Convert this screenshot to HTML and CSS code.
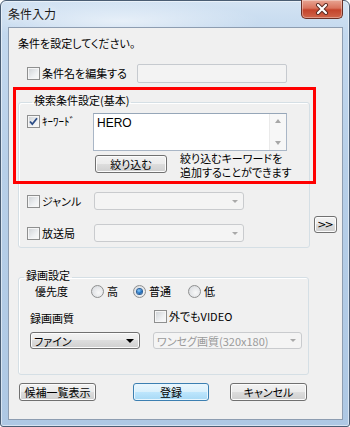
FILE: index.html
```html
<!DOCTYPE html>
<html lang="ja">
<head>
    <meta charset="utf-8">
    <title>条件入力</title>
    <link rel="stylesheet" href="styles.css">
</head>
<body>
    <div class="window">
        <div class="titlebar">
            <span class="title">条件入力</span>
            <button class="close" type="button">
                <svg width="14" height="12" viewBox="0 0 14 12">
                    <path d="M3 2 L11 10 M11 2 L3 10" stroke="#5a2a22" stroke-width="4" stroke-linecap="round" fill="none"/>
                    <path d="M3 2 L11 10 M11 2 L3 10" stroke="#ffffff" stroke-width="2.2" stroke-linecap="round" fill="none"/>
                </svg>
            </button>
        </div>

        <div class="client">
            <p class="intro">条件を設定してください。</p>

            <div class="row name-row">
                <label class="check name-check"><span class="box"></span>条件名を編集する</label>
                <span class="textbox"></span>
            </div>

            <div class="search-area">
                <fieldset class="group search-group">
                    <legend>検索条件設定(基本)</legend>
                    <div class="kw-row">
                        <label class="check kw-check">
                            <span class="box checked">
                                <svg width="11" height="11" viewBox="0 0 11 11">
                                    <path d="M2 5.5 L4.3 8.2 L9 2.2" stroke="#2b4c86" stroke-width="1.8" fill="none"/>
                                </svg>
                            </span>ｷｰﾜｰﾄﾞ
                        </label>
                        <div class="memo">
                            <span class="memo-text">HERO</span>
                            <span class="vscroll">
                                <span class="arrow up"></span>
                                <span class="arrow down"></span>
                            </span>
                        </div>
                    </div>
                    <div class="filter-row">
                        <button class="btn filter-btn" type="button">絞り込む</button>
                        <p class="hint">
                            <span class="hint-line">絞り込むキーワードを</span>
                            <span class="hint-line">追加することができます</span>
                        </p>
                    </div>
                    <div class="row pick-row genre-row">
                        <label class="check pick-check"><span class="box"></span>ジャンル</label>
                        <span class="combo disabled wide"><span class="arrow-down"></span></span>
                    </div>
                    <div class="row pick-row station-row">
                        <label class="check pick-check"><span class="box"></span>放送局</label>
                        <span class="combo disabled wide"><span class="arrow-down"></span></span>
                    </div>
                </fieldset>
                <button class="btn more-btn" type="button">&gt;&gt;</button>
            </div>

            <fieldset class="group rec-group">
                <legend>録画設定</legend>
                <div class="row prio-row">
                    <span class="prio-label">優先度</span>
                    <label class="radio-opt opt-high"><span class="radio"></span>高</label>
                    <label class="radio-opt opt-mid"><span class="radio on"></span>普通</label>
                    <label class="radio-opt"><span class="radio"></span>低</label>
                </div>
                <div class="row quality-row">
                    <span class="quality-label">録画画質</span>
                    <label class="check"><span class="box"></span>外でもVIDEO</label>
                </div>
                <div class="row combo-row">
                    <span class="combo active quality-combo">ファイン<span class="arrow-down"></span></span>
                    <span class="combo disabled oneseg-combo">ワンセグ画質(320x180)<span class="arrow-down"></span></span>
                </div>
            </fieldset>

            <div class="actions">
                <button class="btn act-btn" type="button">候補一覧表示</button>
                <button class="btn act-btn default" type="button">登録</button>
                <button class="btn act-btn" type="button">キャンセル</button>
            </div>
        </div>

        <div class="highlight"></div>
    </div>
</body>
</html>
```

FILE: styles.css
```css
* {
    margin: 0;
    padding: 0;
    box-sizing: border-box;
}

body {
    font-family: "Noto Sans CJK JP", "Noto Sans", sans-serif;
    font-size: 11px;
    font-feature-settings: "palt";
    color: #000;
    background: #fff;
}

.window {
    position: relative;
    width: 350px;
    height: 427px;
    display: flex;
    flex-direction: column;
    border: 1px solid #4a5d73;
    border-radius: 6px 6px 3px 3px;
    background:
        radial-gradient(ellipse 140px 20px at 120px 20px, rgba(255, 255, 255, 0.55), rgba(255, 255, 255, 0)),
        linear-gradient(180deg, #d3e3f3 0%, #c3d8ee 8%, #b7cfe8 40%, #aec8e4 100%);
    box-shadow: inset 0 0 0 1px rgba(255, 255, 255, 0.5);
}

/* title bar */

.titlebar {
    height: 26px;
    display: flex;
    align-items: flex-start;
}

.title {
    margin: 5px 0 0 7px;
    font-size: 12px;
    line-height: 16px;
    color: #1a1a1a;
    text-shadow: 0 0 6px rgba(255, 255, 255, 0.95);
}

.close {
    margin: -1px 6px 0 auto;
    width: 42px;
    height: 19px;
    border: 1px solid #6b2f25;
    border-top: none;
    border-radius: 0 0 5px 5px;
    background: linear-gradient(180deg, #e8a593 0%, #d9735d 45%, #c4432b 55%, #d0654a 100%);
    box-shadow: inset 0 0 0 1px rgba(255, 255, 255, 0.35);
    display: flex;
    align-items: center;
    justify-content: center;
}

/* client area */

.client {
    flex: 1;
    margin: 0 6px 6px 7px;
    border: 1px solid #8d9db1;
    background: #f0f0f0;
}

.intro {
    margin: 7px 0 0 9px;
    line-height: 16px;
}

.row {
    display: flex;
    align-items: center;
}

.check {
    display: flex;
    align-items: center;
    line-height: 13px;
    white-space: nowrap;
}

.box {
    width: 13px;
    height: 13px;
    margin-right: 2px;
    flex: none;
    border: 1px solid #8e8f8f;
    background: linear-gradient(135deg, #cdd0d4 0%, #eef0f2 60%, #fafafa 100%);
    box-shadow: inset 0 0 0 1px #f6f6f6;
    display: flex;
    align-items: center;
    justify-content: center;
}

.name-row {
    margin: 12px 0 0 18px;
    height: 20px;
}

.name-check {
    width: 110px;
}

.textbox {
    width: 150px;
    height: 19px;
    border: 1px solid #c6cacf;
    border-radius: 2px;
    background: #f3f3f3;
}

/* group boxes */

.group {
    min-width: 0;
    border: 1px solid #d5dfe5;
    border-radius: 3px;
    box-shadow: inset 1px 1px 0 #fff;
}

.group legend {
    margin-left: 5px;
    padding: 0 2px 4px;
    line-height: 12px;
}

.search-area {
    display: flex;
    align-items: flex-end;
    margin: 11px 0 0 9px;
}

.search-group {
    width: 292px;
    padding: 3px 0 5px 8px;
}

.kw-row {
    display: flex;
    height: 38px;
}

.kw-check {
    width: 66px;
    align-self: flex-start;
    margin-top: 2px;
}

.memo {
    width: 194px;
    height: 38px;
    display: flex;
    border: 1px solid #a9b6c6;
    border-top-color: #96a6b8;
    background: #fff;
}

.memo-text {
    flex: 1;
    padding: 2px 3px;
    line-height: 14px;
    font-family: "Liberation Sans", sans-serif;
    font-size: 12px;
}

.vscroll {
    width: 17px;
    display: flex;
    flex-direction: column;
    justify-content: space-between;
    align-items: center;
    padding: 5px 0;
    background: #f7f7f7;
    border-left: 1px solid #eaeaea;
}

.arrow {
    width: 0;
    height: 0;
    border-left: 3px solid transparent;
    border-right: 3px solid transparent;
}

.arrow.up {
    border-bottom: 4px solid #a7a7a7;
}

.arrow.down {
    border-top: 4px solid #a7a7a7;
}

.filter-row {
    display: flex;
    align-items: flex-start;
    height: 24px;
    margin-top: 2px;
}

.filter-btn {
    width: 72px;
    height: 18px;
    margin: 2px 0 0 68px;
}

.hint {
    margin: -2px 0 0 13px;
}

.hint-line {
    display: block;
    line-height: 14px;
}

.pick-row {
    height: 18px;
}

.genre-row {
    margin-top: 15px;
}

.station-row {
    margin-top: 14px;
}

.pick-check {
    width: 67px;
}

/* combo boxes */

.combo {
    position: relative;
    height: 18px;
    display: flex;
    align-items: center;
    padding-left: 3px;
    border-radius: 3px;
    line-height: 14px;
    white-space: nowrap;
}

.combo.disabled {
    border: 1px solid #c9cbce;
    background: #f4f4f4;
    color: #9a9a9a;
}

.combo.active {
    border: 1px solid #707070;
    background: linear-gradient(180deg, #f2f2f2 0%, #ebebeb 50%, #dddddd 50%, #cfcfcf 100%);
    box-shadow: inset 0 0 0 1px #fcfcfc;
}

.combo.wide {
    width: 150px;
}

.arrow-down {
    margin-left: auto;
    margin-right: 5px;
    width: 0;
    height: 0;
    border-left: 3px solid transparent;
    border-right: 3px solid transparent;
    border-top: 3px solid #a9a9a9;
}

.combo.active .arrow-down {
    border-left-width: 4px;
    border-right-width: 4px;
    border-top: 4px solid #000;
    margin-right: 5px;
}

/* buttons */

.btn {
    font: inherit;
    color: #000;
    border: 1px solid #707070;
    border-radius: 3px;
    background: linear-gradient(180deg, #f2f2f2 0%, #ebebeb 50%, #dddddd 50%, #cfcfcf 100%);
    box-shadow: inset 0 0 0 1px #fcfcfc;
    line-height: 14px;
    white-space: nowrap;
}

.btn.default {
    border-color: #3c7fb1;
    background: linear-gradient(180deg, #eaf6fd 0%, #d9f0fc 50%, #bee6fd 50%, #a7d9f5 100%);
    box-shadow: inset 0 0 0 1px #e8f6fe;
}

.more-btn {
    width: 23px;
    height: 17px;
    margin: 0 0 15px 4px;
    font-family: "DejaVu Sans", sans-serif;
    font-size: 11px;
    letter-spacing: -2px;
    padding-right: 2px;
}

/* recording group */

.rec-group {
    width: 291px;
    margin: 21px 0 0 9px;
    padding: 0 0 25px 0;
}

.prio-row {
    height: 13px;
    margin-left: 16px;
    line-height: 13px;
}

.prio-label {
    width: 56px;
}

.radio-opt {
    display: flex;
    align-items: center;
}

.opt-high {
    width: 42px;
}

.opt-mid {
    width: 55px;
}

.radio {
    width: 13px;
    height: 13px;
    margin-right: 3px;
    border: 1px solid #8e8f8f;
    border-radius: 50%;
    background: radial-gradient(circle at 60% 60%, #f8f8f8 0%, #e2e4e7 60%, #cfd2d6 100%);
    display: flex;
    align-items: center;
    justify-content: center;
}

.radio.on::after {
    content: "";
    width: 5px;
    height: 5px;
    border-radius: 50%;
    background: radial-gradient(circle at 40% 35%, #8fd0ff 0%, #1e6fc0 55%, #0f3f7c 100%);
    box-shadow: 0 0 0 1px #2a5f98;
}

.quality-row {
    height: 13px;
    margin: 12px 0 0 11px;
}

.quality-label {
    width: 124px;
    margin-top: 3px;
}

.combo-row {
    height: 17px;
    margin: 9px 0 0 11px;
}

.combo-row .combo {
    height: 17px;
}

.quality-combo {
    width: 110px;
}

.oneseg-combo {
    width: 149px;
    margin-left: 13px;
}

.actions {
    display: flex;
    margin: 8px 0 0 10px;
}

.act-btn {
    width: 77px;
    height: 18px;
}

.act-btn.default {
    width: 76px;
    margin-left: 37px;
}

.act-btn.default + .act-btn {
    margin-left: 21px;
}

/* red annotation frame drawn over the dialog */

.highlight {
    position: absolute;
    left: 12px;
    top: 86px;
    width: 303px;
    height: 97px;
    border: 3px solid #ff0000;
}
```
